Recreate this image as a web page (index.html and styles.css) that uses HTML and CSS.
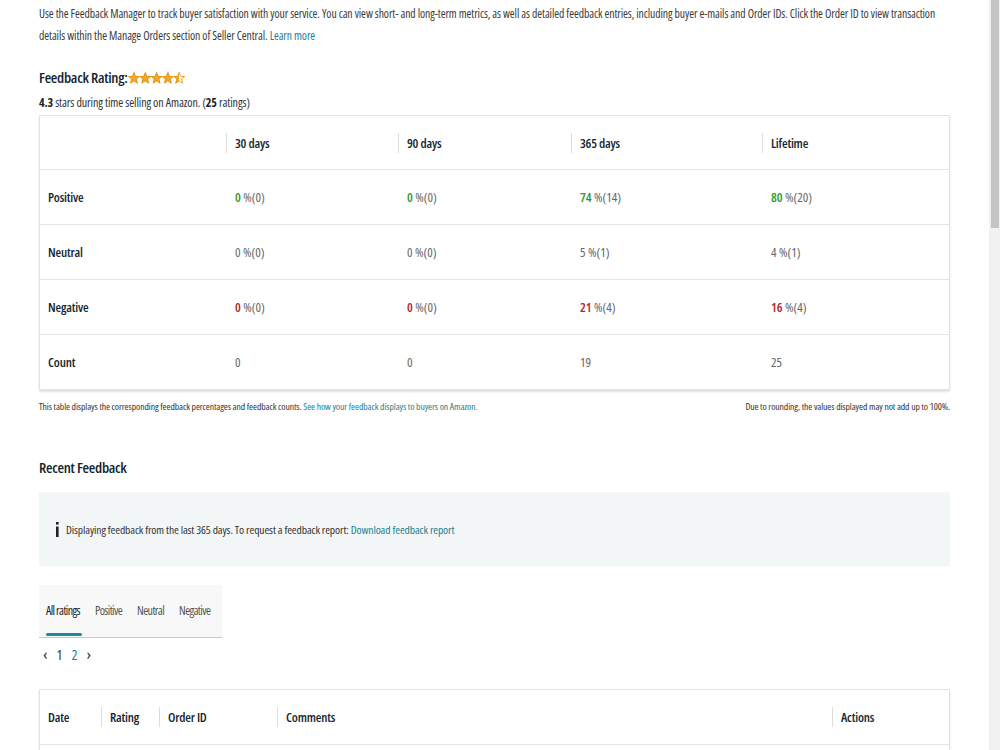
FILE: index.html
```html
<!DOCTYPE html>
<html lang="en">
<head>
    <meta charset="UTF-8">
    <meta name="viewport" content="width=device-width, initial-scale=1.0">
    <title>Feedback Manager</title>
    <link rel="stylesheet" href="styles.css">
</head>
<body>
    <div class="page">
        <!-- Intro -->
        <p class="intro">
            Use the Feedback Manager to track buyer satisfaction with your service. You can view short- and long-term metrics, as well as detailed feedback entries, including buyer e-mails and Order IDs. Click the Order ID to view transaction details within the Manage Orders section of Seller Central. <a href="#">Learn more</a>
        </p>

        <!-- Rating summary -->
        <h2 class="rating-title">Feedback Rating:<span class="stars">
            <svg width="57" height="13" viewBox="0 0 57 13">
                <defs>
                    <path id="star" d="M5.5 0.4 L7 4.3 L11 4.5 L7.9 7 L9 11.2 L5.5 8.9 L2 11.2 L3.1 7 L0 4.5 L4 4.3 Z"/>
                    <linearGradient id="half">
                        <stop offset="50%" stop-color="#f5a623"/>
                        <stop offset="50%" stop-color="#fff"/>
                    </linearGradient>
                </defs>
                <use href="#star" x="0.5" y="1" fill="#f5a623" stroke="#e08a00" stroke-width="0.8"/>
                <use href="#star" x="11.8" y="1" fill="#f5a623" stroke="#e08a00" stroke-width="0.8"/>
                <use href="#star" x="23.1" y="1" fill="#f5a623" stroke="#e08a00" stroke-width="0.8"/>
                <use href="#star" x="34.4" y="1" fill="#f5a623" stroke="#e08a00" stroke-width="0.8"/>
                <use href="#star" x="45.7" y="1" fill="url(#half)" stroke="#e08a00" stroke-width="0.8"/>
            </svg></span></h2>
        <p class="rating-sub"><b>4.3</b> stars during time selling on Amazon. (<b>25</b> ratings)</p>

        <div class="card metrics">
            <div class="mrow head">
                <div class="th first">&nbsp;</div>
                <div class="th">30 days</div>
                <div class="th">90 days</div>
                <div class="th">365 days</div>
                <div class="th">Lifetime</div>
            </div>
            <div class="mrow">
                <div class="label">Positive</div>
                <div class="val"><span class="pos">0</span> %(0)</div>
                <div class="val"><span class="pos">0</span> %(0)</div>
                <div class="val"><span class="pos">74</span> %(14)</div>
                <div class="val"><span class="pos">80</span> %(20)</div>
            </div>
            <div class="mrow">
                <div class="label">Neutral</div>
                <div class="val">0 %(0)</div>
                <div class="val">0 %(0)</div>
                <div class="val">5 %(1)</div>
                <div class="val">4 %(1)</div>
            </div>
            <div class="mrow">
                <div class="label">Negative</div>
                <div class="val"><span class="neg">0</span> %(0)</div>
                <div class="val"><span class="neg">0</span> %(0)</div>
                <div class="val"><span class="neg">21</span> %(4)</div>
                <div class="val"><span class="neg">16</span> %(4)</div>
            </div>
            <div class="mrow">
                <div class="label">Count</div>
                <div class="val">0</div>
                <div class="val">0</div>
                <div class="val">19</div>
                <div class="val">25</div>
            </div>
        </div>

        <div class="caption">
            <span>This table displays the corresponding feedback percentages and feedback counts. <a href="#">See how your feedback displays to buyers on Amazon.</a></span>
            <span>Due to rounding, the values displayed may not add up to 100%.</span>
        </div>

        <!-- Recent feedback -->
        <h2 class="section-title">Recent Feedback</h2>

        <div class="info-box">
            <svg class="info-icon" width="5" height="15" viewBox="0 0 5 15">
                <rect x="1" y="0" width="2.6" height="2.6" fill="#222"/>
                <rect x="1" y="4.5" width="2.6" height="10.5" fill="#222"/>
            </svg>
            <span>Displaying feedback from the last 365 days. To request a feedback report: <a href="#">Download feedback report</a></span>
        </div>

        <div class="tabs">
            <a class="tab active" href="#">All ratings</a>
            <a class="tab" href="#">Positive</a>
            <a class="tab" href="#">Neutral</a>
            <a class="tab" href="#">Negative</a>
        </div>

        <div class="pager">
            <span class="arrow">&lsaquo;</span>
            <span>1</span>
            <a href="#">2</a>
            <span class="arrow">&rsaquo;</span>
        </div>

        <div class="card feedback">
            <div class="frow head">
                <div class="th first">Date</div>
                <div class="th">Rating</div>
                <div class="th">Order ID</div>
                <div class="th">Comments</div>
                <div class="th">Actions</div>
            </div>
            <div class="frow"></div>
        </div>
    </div>

    <!-- scrollbar -->
    <div class="scrollbar"><div class="thumb"></div></div>
</body>
</html>
```
FILE: styles.css
```css
html, body {
    overflow: hidden;
    height: 100%;
}

body {
    margin: 0;
    padding: 0;
    font-family: "Open Sans", sans-serif;
    font-stretch: 75%;
    color: #3a3a3a;
    background: #fff;
}

a {
    color: #1b7f91;
    text-decoration: none;
}

.page {
    width: 911px;
    margin-left: 39px;
    padding-top: 2px;
}

.intro {
    margin: 0;
    max-width: 903px;
    font-size: 11.7px;
    letter-spacing: -0.08px;
    line-height: 22px;
}

.rating-title {
    margin: 19px 0 0;
    font-size: 15px;
    line-height: 24px;
    font-weight: 600;
    letter-spacing: -0.3px;
    color: #14252d;
    display: flex;
    align-items: center;
}

.stars {
    display: inline-flex;
    margin-left: 1px;
}

.rating-sub {
    margin: 5px 0 0;
    font-size: 12px;
    letter-spacing: -0.1px;
    line-height: 18px;
    color: #333;
}

.rating-sub b {
    font-weight: 700;
    color: #222;
}

/* Tables */
.card {
    border: 1px solid #e3e3e3;
    box-shadow: 0 2px 2px rgba(0, 0, 0, 0.12);
    background: #fff;
}

.metrics {
    margin-top: 3px;
}

.mrow {
    display: grid;
    grid-template-columns: 186px 172px 173px 191px 1fr;
    align-items: center;
    height: 54px;
    border-top: 1px solid #e5e5e5;
}

.mrow.head {
    height: 53px;
    border-top: none;
}

.th {
    border-left: 1px solid #dcdcdc;
    padding-left: 8px;
    line-height: 20px;
    font-size: 13px;
    font-weight: 600;
    letter-spacing: -0.2px;
    color: #16262e;
}

.th.first {
    border-left: none;
    padding-left: 8px;
}

.label {
    padding-left: 8px;
    font-size: 13px;
    font-weight: 600;
    letter-spacing: -0.2px;
    color: #16262e;
}

.val {
    padding-left: 9px;
    font-size: 13px;
    color: #666;
}

.pos {
    color: #2f9a2f;
    font-weight: 600;
}

.neg {
    color: #b0262b;
    font-weight: 600;
}

.caption {
    display: flex;
    justify-content: space-between;
    margin-top: 10px;
    font-size: 9.7px;
    letter-spacing: -0.1px;
    line-height: 14px;
    color: #333;
}

.section-title {
    margin: 41px 0 0;
    font-size: 15px;
    line-height: 24px;
    font-weight: 600;
    letter-spacing: -0.3px;
    color: #14252d;
}

.info-box {
    margin-top: 13px;
    height: 74px;
    background: #f2f6f7;
    display: flex;
    align-items: center;
    padding-left: 16px;
    font-size: 11.6px;
    letter-spacing: -0.12px;
    color: #333;
}

.info-icon {
    margin-right: 6px;
}

.tabs {
    margin-top: 19px;
    width: 176px;
    height: 52px;
    background: #f8f8f8;
    border-bottom: 1px solid #c9c9c9;
    display: flex;
    align-items: center;
    padding-left: 7px;
}

.tab {
    position: relative;
    flex-shrink: 0;
    white-space: nowrap;
    margin-right: 15px;
    font-size: 12px;
    letter-spacing: -0.6px;
    color: #555;
    line-height: 18px;
}

.tab.active {
    color: #222;
}

.tab.active::after {
    content: "";
    position: absolute;
    left: 0;
    right: -2px;
    top: 31px;
    height: 3px;
    border-radius: 2px;
    background: #1b8a9c;
}

.pager {
    margin-top: 6px;
    height: 20px;
    display: flex;
    align-items: center;
    gap: 9px;
    padding-left: 4px;
    font-size: 14px;
    color: #333;
}

.pager .arrow {
    font-size: 17px;
    line-height: 20px;
}

.feedback {
    margin-top: 25px;
}

.frow {
    display: grid;
    grid-template-columns: 61px 58px 118px 555px 1fr;
    align-items: center;
    height: 54px;
    border-top: 1px solid #e5e5e5;
}

.frow.head {
    border-top: none;
}

.scrollbar {
    position: fixed;
    top: 0;
    right: 0;
    width: 11px;
    height: 750px;
    background: #f1f1f1;
}

.thumb {
    margin-left: 2px;
    width: 8px;
    height: 228px;
    background: #c4c4c4;
}
```
